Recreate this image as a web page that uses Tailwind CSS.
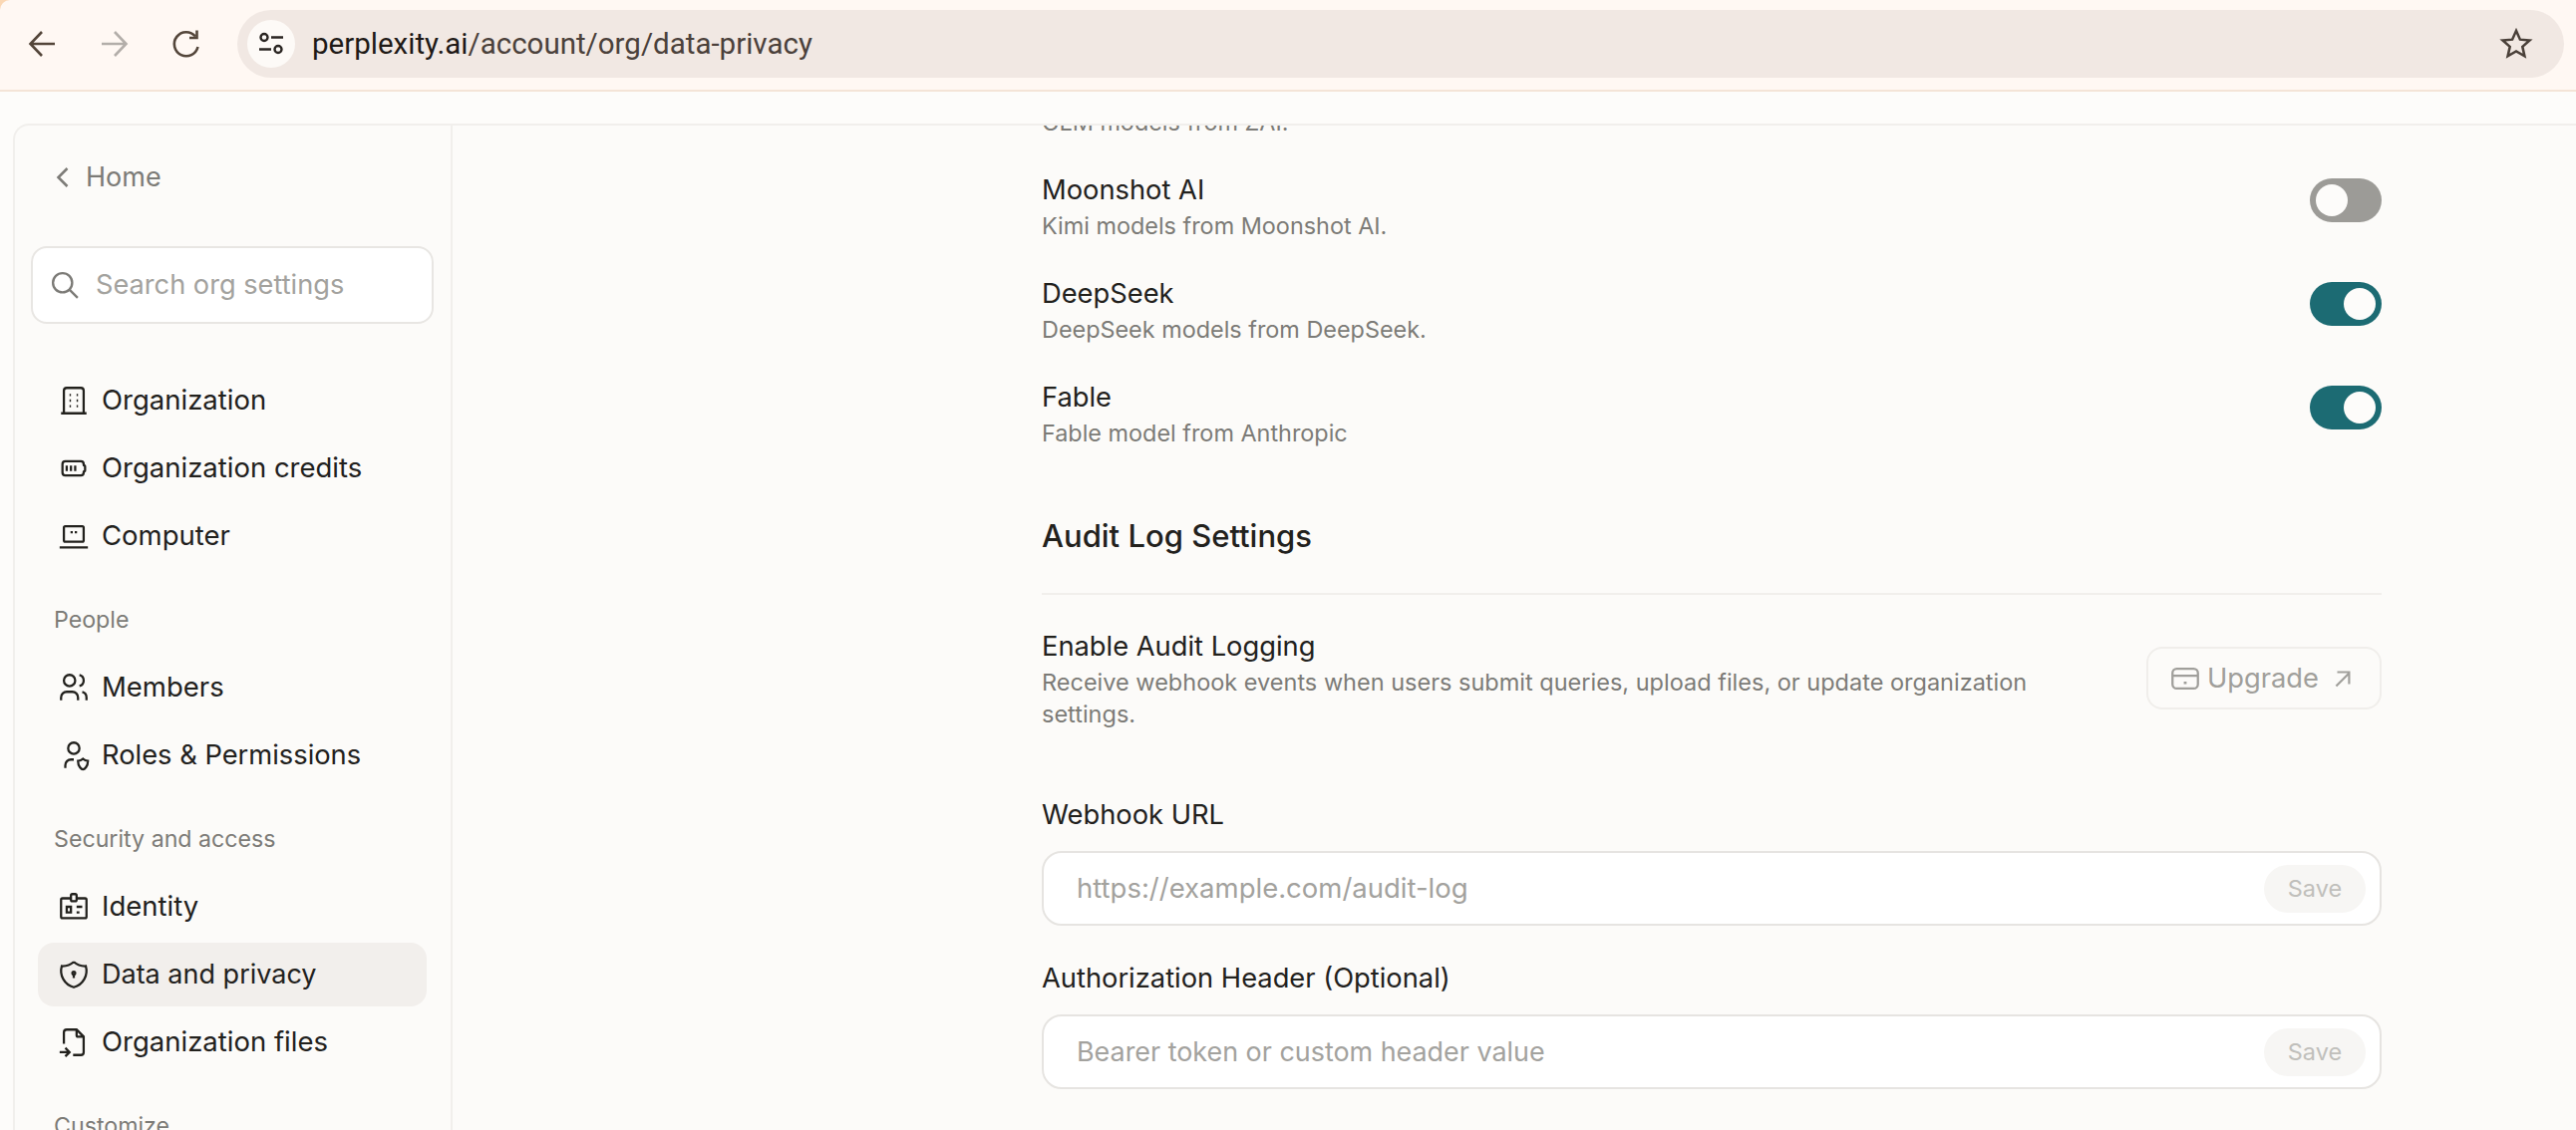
<!DOCTYPE html>
<html lang="en">
<head>
    <meta charset="UTF-8">
    <script src="https://cdn.jsdelivr.net/npm/@tailwindcss/browser@4"></script>
    <title>Data and privacy</title>
</head>
<body class="w-[2584px] h-[1134px] overflow-hidden bg-[#fdfcfa] font-['Inter',sans-serif] text-[#22211d]">

    <!-- browser toolbar -->
    <div class="bg-[#fbd8b4]">
    <header class="flex items-start h-[92px] pt-[10px] bg-[#fff8f3] border-b-2 border-[#f4e4d7] rounded-tl-[10px]">
        <div class="flex items-center h-[68px] w-[238px] shrink-0 text-[#54463a]">
            <svg class="ml-[26px]" width="34" height="34" viewBox="0 0 34 34" fill="none" stroke="currentColor" stroke-width="2.6"><path d="M29 17H5M16 5L4.500 17L16 29"/></svg>
            <svg class="ml-[37px] text-[#b3aea9]" width="34" height="34" viewBox="0 0 34 34" fill="none" stroke="currentColor" stroke-width="2.6"><path d="M5 17H29M18 5L29.500 17L18 29"/></svg>
            <svg class="ml-[39px]" width="34" height="34" viewBox="0 0 34 34" fill="none" stroke="currentColor" stroke-width="2.6"><path d="M26 9.500A12 12 0 1 0 28.500 20"/><path d="M27.500 3.500V11H20"/></svg>
        </div>
        <div class="flex items-center w-[2334px] h-[68px] rounded-full bg-[#f1e8e3] pl-[10px] pr-[30px]">
            <div class="flex items-center justify-center w-[48px] h-[48px] rounded-full bg-[#fdfaf7] text-[#2a2522]">
                <svg width="28" height="28" viewBox="0 0 28 28" fill="none" stroke="currentColor" stroke-width="2.400"><circle cx="7" cy="7.500" r="3.500"/><path d="M14 7.500H26M2 19.500H14"/><circle cx="21" cy="19.500" r="3.500"/></svg>
            </div>
            <div class="ml-[17px] text-[29.5px] leading-[36px] font-['Roboto',sans-serif] text-[#4b413b]"><span class="text-[#1f1a17]">perplexity.ai</span>/account/org/data-privacy</div>
            <svg class="ml-auto text-[#4a4039]" width="36" height="36" viewBox="0 0 24 24" fill="none" stroke="currentColor" stroke-width="1.700" stroke-linejoin="miter"><path d="M12 3.200l2.600 5.900 6.400.6-4.800 4.200 1.400 6.300L12 17l-5.600 3.200 1.400-6.300-4.800-4.200 6.400-.6z"/></svg>
        </div>
    </header>
    </div>

    <div class="flex h-[1042px] mt-[32px] ml-[13px] border-t-2 border-l-2 border-[#f1efec] rounded-tl-[16px] bg-[#fcfbf9] overflow-hidden">

        <!-- sidebar -->
        <aside class="w-[439px] shrink-0 border-r-2 border-[#f1efec] pt-[26px]">
            <div class="flex items-center h-[52px] pl-[30px] text-[#7c7b77]">
                <svg width="36" height="36" viewBox="0 0 24 24" fill="none" stroke="currentColor" stroke-width="1.700"><path d="M15 6l-6 6l6 6"/></svg>
                <span class="ml-[5px] text-[27px]">Home</span>
            </div>
            <div class="flex items-center ml-[16px] mt-[43px] w-[404px] h-[78px] rounded-[16px] border-2 border-[#e8e6e3] bg-white pl-[16px] text-[#a3a29e]">
                <svg class="text-[#7c7b77]" width="33" height="33" viewBox="0 0 24 24" fill="none" stroke="currentColor" stroke-width="1.700"><path d="M3 10a7 7 0 1 0 14 0a7 7 0 1 0 -14 0M21 21l-6 -6"/></svg>
                <span class="ml-[14px] text-[27.2px]">Search org settings</span>
            </div>

            <nav class="mt-[45px] ml-[23px] w-[390px] text-[27.5px]">
                <div class="flex flex-col gap-[4px]">
                    <a class="flex items-center h-[64px] pl-[19px] gap-[11px]">
                        <svg width="34" height="34" viewBox="0 0 24 24" fill="none" stroke="currentColor" stroke-width="1.600"><path d="M3 21h18M9 8h1M9 12h1M9 16h1M14 8h1M14 12h1M14 16h1M5 21v-16a2 2 0 0 1 2 -2h10a2 2 0 0 1 2 2v16"/></svg>
                        Organization
                    </a>
                    <a class="flex items-center h-[64px] pl-[19px] gap-[11px]">
                        <svg width="34" height="34" viewBox="0 0 24 24" fill="none" stroke="currentColor" stroke-width="1.600"><path d="M6 7h11a2 2 0 0 1 2 2v.5a.5 .5 0 0 0 .5 .5a.5 .5 0 0 1 .5 .5v3a.5 .5 0 0 1 -.5 .5a.5 .5 0 0 0 -.5 .5v.5a2 2 0 0 1 -2 2h-11a2 2 0 0 1 -2 -2v-6a2 2 0 0 1 2 -2M7 10v4M10 10v4M13 10v4"/></svg>
                        Organization credits
                    </a>
                    <a class="flex items-center h-[64px] pl-[19px] gap-[11px]">
                        <svg width="34" height="34" viewBox="0 0 24 24" fill="none" stroke="currentColor" stroke-width="1.600"><path d="M2 20h20M5 5m0 1a1 1 0 0 1 1 -1h12a1 1 0 0 1 1 1v9a1 1 0 0 1 -1 1h-12a1 1 0 0 1 -1 -1zM10.500 8.500v1.500M13.500 8.500v1.500"/></svg>
                        Computer
                    </a>
                </div>

                <div class="flex items-center h-[88px] pt-[16px] pl-[16px] text-[23.2px] text-[#7c7b77]">People</div>
                <div class="flex flex-col gap-[4px]">
                    <a class="flex items-center h-[64px] pl-[19px] gap-[11px]">
                        <svg width="34" height="34" viewBox="0 0 24 24" fill="none" stroke="currentColor" stroke-width="1.600"><path d="M5 7a4 4 0 1 0 8 0a4 4 0 1 0 -8 0M3 21v-2a4 4 0 0 1 4 -4h4a4 4 0 0 1 4 4v2M16 3.130a4 4 0 0 1 0 7.750M21 21v-2a4 4 0 0 0 -3 -3.850"/></svg>
                        Members
                    </a>
                    <a class="flex items-center h-[64px] pl-[19px] gap-[11px]">
                        <svg width="34" height="34" viewBox="0 0 24 24" fill="none" stroke="currentColor" stroke-width="1.600"><path d="M6 21v-2a4 4 0 0 1 4 -4h2M22 16c0 4 -2.500 6 -3.500 6s-3.500 -2 -3.500 -6c1 0 2.500 -.5 3.500 -1.500c1 1 2.500 1.500 3.500 1.500zM8 7a4 4 0 1 0 8 0a4 4 0 0 0 -8 0"/></svg>
                        <span class="text-[27.3px]">Roles &amp; Permissions</span>
                    </a>
                </div>

                <div class="flex items-center h-[88px] pt-[16px] pl-[16px] text-[23.2px] text-[#7c7b77]">Security and access</div>
                <div class="flex flex-col gap-[4px]">
                    <a class="flex items-center h-[64px] pl-[19px] gap-[11px]">
                        <svg width="34" height="34" viewBox="0 0 24 24" fill="none" stroke="currentColor" stroke-width="1.600"><path d="M7 12h3v4h-3zM10 6h-6a1 1 0 0 0 -1 1v12a1 1 0 0 0 1 1h16a1 1 0 0 0 1 -1v-12a1 1 0 0 0 -1 -1h-6M10 4a1 1 0 0 1 1 -1h2a1 1 0 0 1 1 1v3a1 1 0 0 1 -1 1h-2a1 1 0 0 1 -1 -1zM14 16h2M14 12h4"/></svg>
                        Identity
                    </a>
                    <a class="flex items-center h-[64px] pl-[19px] gap-[11px] rounded-[16px] bg-[#f2efec]">
                        <svg width="34" height="34" viewBox="0 0 24 24" fill="none" stroke="currentColor" stroke-width="1.600"><path d="M12 3a12 12 0 0 0 8.500 3a12 12 0 0 1 -8.500 15a12 12 0 0 1 -8.500 -15a12 12 0 0 0 8.500 -3M11 11a1 1 0 1 0 2 0a1 1 0 1 0 -2 0M12 12v2.500"/></svg>
                        <span class="text-[27px]">Data and privacy</span>
                    </a>
                    <a class="flex items-center h-[64px] pl-[19px] gap-[11px]">
                        <svg width="34" height="34" viewBox="0 0 24 24" fill="none" stroke="currentColor" stroke-width="1.600"><path d="M14 3v4a1 1 0 0 0 1 1h4M5 13v-8a2 2 0 0 1 2 -2h7l5 5v11a2 2 0 0 1 -2 2h-5.500m-9.500 -2h7m-3 -3l3 3l-3 3"/></svg>
                        Organization files
                    </a>
                </div>

                <div class="flex items-center h-[88px] pt-[16px] pl-[16px] text-[23.2px] text-[#7c7b77]">Customize</div>
            </nav>
        </aside>

        <!-- settings page, scrolled -->
        <main class="flex-1 overflow-hidden pl-[591px]">
            <div class="w-[1344px] -mt-[58px]">
                <div class="h-[104px] pt-[39px] text-[23.4px] leading-[32px] text-[#7c7b77]">GLM models from ZAI.</div>
                <div class="flex justify-between items-start h-[104px]">
                    <div class="pt-[1px]">
                        <div class="text-[27.3px] leading-[36px]">Moonshot AI</div>
                        <div class="mt-[2px] text-[23.4px] leading-[32px] text-[#7c7b77]">Kimi models from Moonshot AI.</div>
                    </div>
                    <div class="flex items-center w-[72px] h-[44px] mt-[7px] p-[6px] rounded-full bg-[#9c9b97]">
                        <div class="w-[32px] h-[32px] rounded-full bg-[#fdfcfa]"></div>
                    </div>
                </div>
                <div class="flex justify-between items-start h-[104px]">
                    <div class="pt-[1px]">
                        <div class="text-[27.3px] leading-[36px]">DeepSeek</div>
                        <div class="mt-[2px] text-[23.4px] leading-[32px] text-[#7c7b77]">DeepSeek models from DeepSeek.</div>
                    </div>
                    <div class="flex items-center justify-end w-[72px] h-[44px] mt-[7px] p-[6px] rounded-full bg-[#1c6b73]">
                        <div class="w-[32px] h-[32px] rounded-full bg-[#fdfcfa]"></div>
                    </div>
                </div>
                <div class="flex justify-between items-start h-[104px]">
                    <div class="pt-[1px]">
                        <div class="text-[27.3px] leading-[36px]">Fable</div>
                        <div class="mt-[2px] text-[23.4px] leading-[32px] text-[#7c7b77]">Fable model from Anthropic</div>
                    </div>
                    <div class="flex items-center justify-end w-[72px] h-[44px] mt-[7px] p-[6px] rounded-full bg-[#1c6b73]">
                        <div class="w-[32px] h-[32px] rounded-full bg-[#fdfcfa]"></div>
                    </div>
                </div>

                <h2 class="mt-[34px] text-[31px] leading-[40px] font-[450] pb-[37px] border-b-2 border-[#f1efec]">Audit Log Settings</h2>

                <div class="flex justify-between items-start mt-[33px]">
                    <div class="w-[1040px] pt-[1px]">
                        <div class="text-[27.3px] leading-[36px]">Enable Audit Logging</div>
                        <div class="mt-[2px] text-[23.5px] leading-[32px] text-[#7c7b77]">Receive webhook events when users submit queries, upload files, or update organization settings.</div>
                    </div>
                    <div class="flex items-center w-[236px] h-[63px] mt-[19px] pl-[20px] rounded-[16px] border-2 border-[#f0eeeb] text-[#a09f9b]">
                        <svg width="34" height="34" viewBox="0 0 24 24" fill="none" stroke="currentColor" stroke-width="1.600"><path d="M3 8a3 3 0 0 1 3 -3h12a3 3 0 0 1 3 3v8a3 3 0 0 1 -3 3h-12a3 3 0 0 1 -3 -3zM3 10h18M7 15h.01M11 15h2"/></svg>
                        <span class="ml-[5px] pt-[2px] text-[27.3px]">Upgrade</span>
                        <svg class="ml-[12px]" width="26" height="26" viewBox="0 0 24 24" fill="none" stroke="currentColor" stroke-width="2"><path d="M17 7l-12 12M6 6h11v11"/></svg>
                    </div>
                </div>

                <div class="mt-[67px] text-[27.3px] leading-[36px]">Webhook URL</div>
                <div class="flex items-center justify-between h-[75px] mt-[18px] pl-[33px] pr-[14px] rounded-[20px] border-2 border-[#e6e4e1] bg-white">
                    <span class="text-[27.5px] text-[#a3a29e]">https://example.com/audit-log</span>
                    <span class="flex items-center justify-center w-[102px] h-[48px] rounded-full bg-[#f7f6f4] text-[23.5px] text-[#c0bfbb]">Save</span>
                </div>

                <div class="mt-[35px] text-[27.3px] leading-[36px]">Authorization Header (Optional)</div>
                <div class="flex items-center justify-between h-[75px] mt-[18px] pl-[33px] pr-[14px] rounded-[20px] border-2 border-[#e6e4e1] bg-white">
                    <span class="text-[26.9px] text-[#a3a29e]">Bearer token or custom header value</span>
                    <span class="flex items-center justify-center w-[102px] h-[48px] rounded-full bg-[#f7f6f4] text-[23.5px] text-[#c0bfbb]">Save</span>
                </div>
            </div>
        </main>
    </div>

</body>
</html>
